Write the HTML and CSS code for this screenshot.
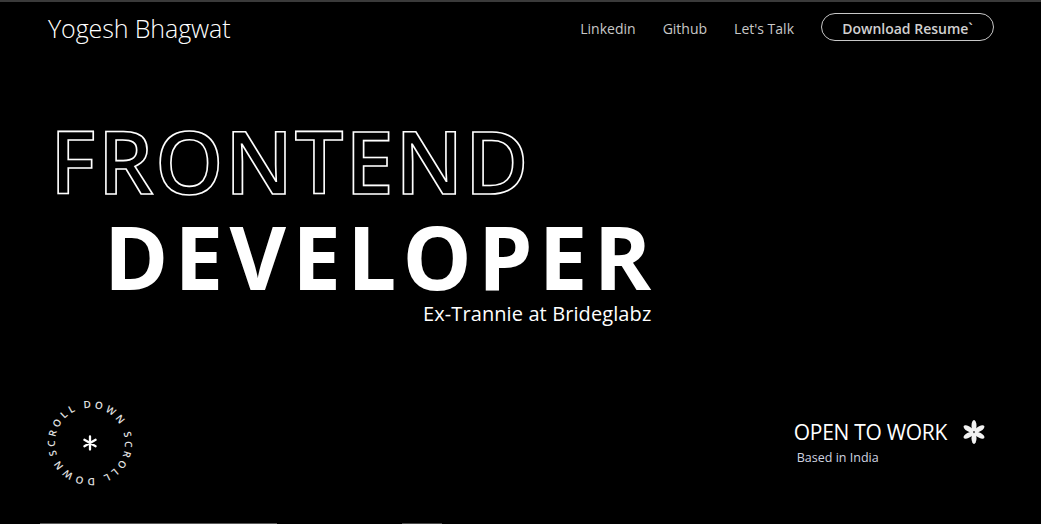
FILE: index.html
```html
<!DOCTYPE html>
<html lang="en">
<head>
<meta charset="utf-8">
<title>Yogesh Bhagwat</title>
<link rel="stylesheet" href="styles.css">
</head>
<body>
<div class="page">
  <header class="header">
    <div class="brand">Yogesh Bhagwat</div>
    <nav class="nav">
      <a class="nav-link" href="#">Linkedin</a>
      <a class="nav-link" href="#">Github</a>
      <a class="nav-link" href="#">Let's Talk</a>
      <a class="resume-btn" href="#">Download Resume`</a>
    </nav>
  </header>
  <main class="hero">
    <div class="title-block">
      <h1 class="outline">FRONTEND</h1>
      <h2 class="solid">DEVELOPER</h2>
      <p class="sub">Ex-Trannie at Brideglabz</p>
    </div>
  </main>
  <section class="bottom">
    <div class="scroll-badge">
      <svg width="100" height="100" viewBox="0 0 100 100">
        <defs>
          <path id="ring" d="M17.11,61.97 A35,35 0 1,1 82.89,38.03 A35,35 0 1,1 17.11,61.97"/>
        </defs>
        <text class="ring-text"><textPath href="#ring" textLength="214" lengthAdjust="spacing">SCROLL DOWN SCROLL DOWN</textPath></text>
        <g class="star-small" transform="translate(50,50)">
          <path d="M0,-6.5 L0,6.5 M-5.6,-3.25 L5.6,3.25 M-5.6,3.25 L5.6,-3.25"/>
        </g>
      </svg>
    </div>
    <div class="work">
      <div class="work-row">
        <span class="work-title">OPEN TO WORK</span>
        <svg class="star-big" width="26" height="26" viewBox="-13 -13 26 26">
          <g>
            <ellipse cx="0" cy="-6.3" rx="2.5" ry="5.6"/>
            <ellipse cx="0" cy="-6.3" rx="2.5" ry="5.6" transform="rotate(60)"/>
            <ellipse cx="0" cy="-6.3" rx="2.5" ry="5.6" transform="rotate(120)"/>
            <ellipse cx="0" cy="-6.3" rx="2.5" ry="5.6" transform="rotate(180)"/>
            <ellipse cx="0" cy="-6.3" rx="2.5" ry="5.6" transform="rotate(240)"/>
            <ellipse cx="0" cy="-6.3" rx="2.5" ry="5.6" transform="rotate(300)"/>
          </g>
        </svg>
      </div>
      <div class="work-sub">Based in India</div>
    </div>
  </section>
  <div class="edge">
    <span class="edge-a"></span><span class="edge-b"></span>
  </div>
</div>
</body>
</html>
```
FILE: styles.css
```css
* { box-sizing: border-box; }
html, body { margin: 0; padding: 0; background: #000; }
body { font-family: "Open Sans", "Noto Sans", sans-serif; color: #fff; }
.page {
  width: 1041px;
  height: 524px;
  border-top: 2px solid #3a3a3a;
  display: flex;
  flex-direction: column;
  overflow: hidden;
}
.header {
  height: 51px;
  display: flex;
  align-items: center;
  justify-content: space-between;
  padding: 0 47px 0 48px;
}
.brand {
  font-size: 25px;
  font-weight: 300;
  letter-spacing: -0.1px;
  color: #fff;
}
.nav { display: flex; align-items: center; margin-top: -1px; }
.nav-link {
  color: #c8c8c8;
  text-decoration: none;
  font-size: 14px;
  margin-right: 27px;
  padding-top: 3px;
}
.resume-btn {
  display: inline-flex;
  align-items: center;
  justify-content: center;
  width: 173px;
  height: 28px;
  padding-top: 2px;
  border: 1px solid #c8c8c8;
  border-radius: 14px;
  color: #d0d0d0;
  text-decoration: none;
  font-size: 14px;
  font-weight: 600;
}
.hero {
  padding-left: 50px;
  padding-top: 62px;
  height: 293px;
}
.title-block { display: inline-flex; flex-direction: column; align-items: flex-start; }
.outline {
  margin: 0;
  font-size: 87px;
  font-weight: 600;
  line-height: 90px;
  color: transparent;
  -webkit-text-stroke: 1.6px #fff;
  letter-spacing: 1.5px;
}
.solid {
  margin: 6px -6px 0 54px;
  font-size: 87px;
  font-weight: 700;
  line-height: 90px;
  color: #fff;
  letter-spacing: 6.2px;
}
.sub {
  align-self: flex-end;
  margin: 0;
  font-size: 20px;
  line-height: 26px;
  color: #fff;
  letter-spacing: 0.1px;
}
.bottom {
  display: flex;
  justify-content: space-between;
  align-items: flex-start;
  padding: 0 54px 0 40px;
  height: 126px;
}
.scroll-badge { margin-top: 47px; width: 100px; height: 100px; }
.ring-text {
  fill: #e2e2e2;
  font-size: 10px;
  font-family: "Open Sans", sans-serif;
  font-weight: 600;
}
.star-small path { stroke: #fff; stroke-width: 2.3; stroke-linecap: round; fill: none; }
.work { margin-top: 72px; }
.work-row { display: flex; align-items: center; margin-left: -3px; }
.work-title { font-size: 21px; color: #fff; letter-spacing: -0.3px; }
.star-big { margin-left: 14px; }
.star-big ellipse { fill: #f2f2f2; }
.work-sub { font-size: 12.5px; color: #d0d4e0; margin-left: 0; margin-top: 3px; }
.edge { margin-top: auto; height: 1px; display: flex; }
.edge-a { margin-left: 40px; width: 237px; background: #5a5a5a; }
.edge-b { margin-left: 125px; width: 40px; background: #4a4a4a; }
```
